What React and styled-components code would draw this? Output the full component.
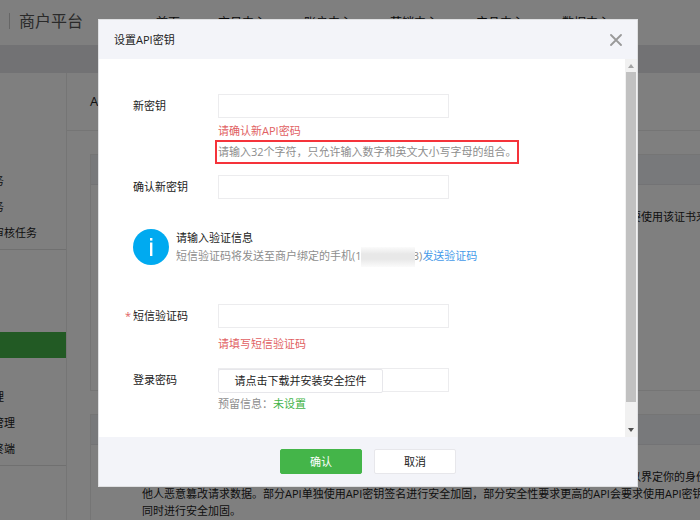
import React from 'react';
import styled, { createGlobalStyle } from 'styled-components';

const GlobalStyle = createGlobalStyle`
	* {
		box-sizing: border-box;
	}

	body {
		margin: 0;
		overflow: hidden;
		background: #fff;
		color: #222;
		font-family: 'Open Sans', 'Noto Sans CJK SC', sans-serif;
		font-size: 11px;
		line-height: 16px;
	}

	button,
	input {
		font: inherit;
		color: inherit;
	}
`;

const navItems = ['首页', '交易中心', '账户中心', '营销中心', '产品中心', '数据中心'];

const App = () => {
	return (
		<>
			<GlobalStyle />
			<Page>
				<Header>
					<Brand>商户平台</Brand>
					<Nav>
						{navItems.map((item) => (
							<NavLink href='#' key={item}>
								{item}
							</NavLink>
						))}
					</Nav>
				</Header>
				<Band />
				<Columns>
					<Sidebar>
						<SideGroup $top='95px'>
							<SideLink href='#'>务</SideLink>
							<SideLink href='#'>务</SideLink>
							<SideLink href='#'>审核任务</SideLink>
						</SideGroup>
						<SideGroup $top='82px'>
							<SideLink href='#' $active aria-label='API安全' />
							<SideSpace />
							<SideLink href='#'>理</SideLink>
							<SideLink href='#'>管理</SideLink>
							<SideLink href='#'>终端</SideLink>
						</SideGroup>
					</Sidebar>
					<Main>
						<PageTitle>API安全</PageTitle>
						<Card>
							<CardHead />
							<CardBody>
								<EndLine>要使用该证书来</EndLine>
							</CardBody>
						</Card>
						<Card>
							<CardHead />
							<CardBody>
								<EndLine>以界定你的身份</EndLine>
								<div>
									他人恶意篡改请求数据。部分API单独使用API密钥签名进行安全加固，部分安全性要求更高的API会要求使用API密钥签
								</div>
								<div>同时进行安全加固。</div>
							</CardBody>
						</Card>
					</Main>
				</Columns>
			</Page>
			<Overlay>
				<Modal role='dialog' aria-labelledby='modal-title'>
					<ModalHead>
						<ModalTitle id='modal-title'>设置API密钥</ModalTitle>
						<CloseButton type='button' aria-label='关闭'>
							<svg width='12' height='12' viewBox='0 0 12 12'>
								<path d='M1 1L11 11M11 1L1 11' stroke='#999' strokeWidth='1.8' strokeLinecap='round' />
							</svg>
						</CloseButton>
					</ModalHead>
					<ModalBody>
						<Form>
							<Row>
								<Label htmlFor='new-key'>新密钥</Label>
								<Control>
									<Input id='new-key' type='text' />
									<ErrorText $top='5px'>请确认新API密码</ErrorText>
									<Highlight>请输入32个字符，只允许输入数字和英文大小写字母的组合。</Highlight>
								</Control>
							</Row>
							<Row $top='11px'>
								<Label htmlFor='confirm-key'>确认新密钥</Label>
								<Control>
									<Input id='confirm-key' type='text' />
								</Control>
							</Row>
							<Notice>
								<svg width='36' height='36' viewBox='0 0 36 36'>
									<circle cx='18' cy='18' r='18' fill='#00aaf0' />
									<rect x='17' y='9' width='2.4' height='2.6' fill='#fff' />
									<rect x='17' y='13.5' width='2.4' height='13.5' fill='#fff' />
								</svg>
								<div>
									<NoticeTitle>请输入验证信息</NoticeTitle>
									<NoticeText>
										短信验证码将发送至商户绑定的手机(13
										<Mask />
										3)<SendLink href='#'>发送验证码</SendLink>
									</NoticeText>
								</div>
							</Notice>
							<Row $top='37px'>
								<Label htmlFor='sms-code'>
									<Star>*</Star>短信验证码
								</Label>
								<Control>
									<Input id='sms-code' type='text' />
									<ErrorText $top='8px'>请填写短信验证码</ErrorText>
								</Control>
							</Row>
							<Row $top='16px'>
								<Label htmlFor='password'>登录密码</Label>
								<Control>
									<PasswordBox>
										<Input id='password' type='password' />
										<InstallButton type='button'>请点击下载并安装安全控件</InstallButton>
									</PasswordBox>
									<Reserved>
										预留信息：<Unset>未设置</Unset>
									</Reserved>
								</Control>
							</Row>
						</Form>
						<ScrollTrack aria-hidden='true'>
							<svg width='12' height='13' viewBox='0 0 12 13'>
								<path d='M3 9L6 5L9 9Z' fill='#a3a3a3' />
							</svg>
							<ScrollThumb />
							<svg width='12' height='13' viewBox='0 0 12 13'>
								<path d='M3 4L6 8L9 4Z' fill='#505050' />
							</svg>
						</ScrollTrack>
					</ModalBody>
					<ModalFoot>
						<Button type='button' $primary>
							确认
						</Button>
						<Button type='button'>取消</Button>
					</ModalFoot>
				</Modal>
			</Overlay>
		</>
	);
};

const Page = styled.div`
	height: 100vh;
	display: flex;
	flex-direction: column;
	overflow: hidden;
`;

const Header = styled.header`
	display: flex;
	align-items: flex-start;
	flex: none;
	height: 45px;
	padding: 13px 0 0 9px;
`;

const Brand = styled.div`
	width: 147px;
	padding-left: 9px;
	border-left: 1px solid #ccc;
	font-size: 16px;
	color: #555;
`;

const Nav = styled.nav`
	display: flex;
	gap: 38px;
	font-size: 12px;
	line-height: 19px;
	white-space: nowrap;
`;

const NavLink = styled.a`
	color: #111;
	text-decoration: none;
`;

const Band = styled.div`
	flex: none;
	height: 28px;
	background: #e4e4e8;
`;

const Columns = styled.div`
	display: flex;
	flex: 1;
	min-height: 0;
`;

const Sidebar = styled.aside`
	flex: none;
	width: 67px;
	overflow: hidden;
	border-right: 1px solid #ebebeb;
`;

const SideGroup = styled.div`
	padding: ${({ $top }) => $top} 0 3px;
	border-bottom: 1px solid #e0e0e0;
`;

/* the menu is scrolled a little past the left edge */
const SideLink = styled.a`
	display: block;
	height: 26px;
	margin-left: -7px;
	line-height: 26px;
	color: #222;
	text-decoration: none;
	background: ${({ $active }) => ($active ? '#44b549' : 'none')};
`;

const SideSpace = styled.div`
	height: 26px;
`;

const Main = styled.main`
	flex: 1;
	min-width: 0;
`;

const PageTitle = styled.h1`
	margin: 0;
	padding-left: 23px;
	border-bottom: 1px solid #ebebeb;
	font-size: 13px;
	font-weight: 400;
	line-height: 57px;
`;

const Card = styled.section`
	margin: 23px -8px 0 23px;
	border: 1px solid #ebebeb;
	min-height: 237px;
`;

const CardHead = styled.div`
	height: 30px;
	background: #f0f2f7;
	border-bottom: 1px solid #e7e7eb;
`;

const CardBody = styled.div`
	padding: 23px 0 0 51px;
	line-height: 17px;
	white-space: nowrap;
`;

const EndLine = styled.div`
	text-align: right;
`;

const Overlay = styled.div`
	position: fixed;
	inset: 0;
	padding: 19px 62px 0 98px;
	background: rgba(0, 0, 0, 0.5);
`;

const Modal = styled.div`
	border: 1px solid #dfe0e2;
	background: #fff;
`;

const ModalHead = styled.div`
	display: flex;
	align-items: center;
	justify-content: space-between;
	height: 39px;
	padding: 0 15px;
	background: #f3f4f9;
`;

const ModalTitle = styled.h2`
	margin: 0;
	font-size: 11px;
	font-weight: 400;
`;

const CloseButton = styled.button`
	display: flex;
	padding: 0;
	border: none;
	background: none;
	cursor: pointer;
`;

const ModalBody = styled.div`
	display: flex;
`;

const Form = styled.form`
	flex: 1;
	padding: 35px 0 25px 26px;
`;

const Row = styled.div`
	display: grid;
	grid-template-columns: 93px 1fr;
	margin-top: ${({ $top }) => $top || '0'};
`;

const Label = styled.label`
	display: flex;
	height: 24px;
	padding-left: 8px;
	line-height: 24px;
`;

const Star = styled.span`
	width: 8px;
	margin-left: -8px;
	color: #e15f63;
`;

const Control = styled.div`
	display: flex;
	flex-direction: column;
	align-items: flex-start;
`;

const Input = styled.input`
	display: block;
	width: 231px;
	height: 24px;
	padding: 0 8px;
	border: 1px solid #ececee;
	background: #fff;
	outline: none;
`;

const ErrorText = styled.div`
	margin-top: ${({ $top }) => $top};
	color: #e15f63;
`;

const Highlight = styled.div`
	margin: 1px 0 0 -3px;
	padding: 0 0 0 1px;
	border: 2px solid #f5333a;
	line-height: 20px;
	color: #8d8d8d;
	white-space: nowrap;
`;

const Notice = styled.div`
	display: flex;
	gap: 7px;
	margin-top: 30px;
	padding-left: 8px;
	line-height: 18px;
	white-space: nowrap;
`;

const NoticeTitle = styled.div`
	color: #222;
`;

const NoticeText = styled.div`
	display: flex;
	color: #8d8d8d;
`;

/* smudge over the middle digits of the phone number */
const Mask = styled.span`
	position: relative;
	width: 54px;
	height: 20px;
	margin: 0 -2px 0 -7px;
	background: linear-gradient(#fbfbfb, #e8e8e8 35%, #e8e8e8 60%, #fbfbfb);
`;

const SendLink = styled.a`
	color: #459ae9;
	text-decoration: none;
`;

const PasswordBox = styled.div`
	position: relative;
`;

const InstallButton = styled.button`
	position: absolute;
	top: 1px;
	left: 0;
	width: 165px;
	height: 24px;
	padding: 0;
	border: 1px solid #e7e7eb;
	border-radius: 2px;
	background: #fff;
	white-space: nowrap;
	cursor: pointer;
`;

const Reserved = styled.div`
	margin-top: 4px;
	color: #8d8d8d;
`;

const Unset = styled.span`
	color: #44b549;
`;

const ScrollTrack = styled.div`
	display: flex;
	flex-direction: column;
	width: 12px;
	background: #f1f1f1;

	svg {
		flex: none;
	}
`;

const ScrollThumb = styled.div`
	flex: 1;
	margin: 0 1px 22px;
	background: #c1c1c1;
`;

const ModalFoot = styled.div`
	display: flex;
	justify-content: center;
	gap: 12px;
	padding: 12px;
	background: #f3f4f9;
`;

const Button = styled.button`
	width: 82px;
	height: 25px;
	padding: 0;
	border: 1px solid ${({ $primary }) => ($primary ? '#44b549' : '#e7e7eb')};
	border-radius: 2px;
	background: ${({ $primary }) => ($primary ? '#44b549' : '#fff')};
	color: ${({ $primary }) => ($primary ? '#fff' : '#222')};
	cursor: pointer;
`;

export default App;
